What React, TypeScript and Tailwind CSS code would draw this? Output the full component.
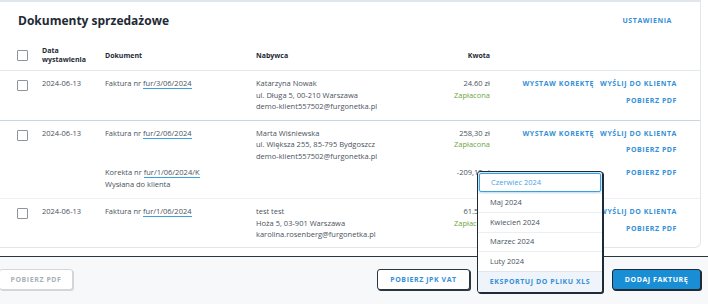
import React from "react"

const font = { fontFamily: '"Open Sans", "Liberation Sans", sans-serif' }

const Checkbox = () => (
  <span className="block h-[11px] w-[11px] rounded-[1px] border border-[#8c959d] bg-white" />
)

const DocLink = ({ label, no }: { label: string; no: string }) => (
  <span>
    {label}{" "}
    <span className="border-b border-[#3aa0e0]">{no}</span>
  </span>
)

const Action = ({ children }: { children: React.ReactNode }) => (
  <span className="text-[7px] font-bold tracking-[0.08em] text-[#3590d8]">{children}</span>
)

interface Row {
  date: string
  doc: string
  buyer: string[]
  amount: string
  status: string
  correction?: { no: string; amount: string }
}

const rows: Row[] = [
  {
    date: "2024-06-13",
    doc: "fur/3/06/2024",
    buyer: ["Katarzyna Nowak", "ul. Długa 5, 00-210 Warszawa", "demo-klient557502@furgonetka.pl"],
    amount: "24.60 zł",
    status: "Zapłacona",
  },
  {
    date: "2024-06-13",
    doc: "fur/2/06/2024",
    buyer: ["Marta Wiśniewska", "ul. Większa 255, 85-795 Bydgoszcz", "demo-klient557502@furgonetka.pl"],
    amount: "258,30 zł",
    status: "Zapłacona",
    correction: { no: "fur/1/06/2024/K", amount: "-209,10 zł" },
  },
  {
    date: "2024-06-13",
    doc: "fur/1/06/2024",
    buyer: ["test test", "Hoża 5, 03-901 Warszawa", "karolina.rosenberg@furgonetka.pl"],
    amount: "61.50 zł",
    status: "Zapłacona",
  },
]

const grid = "grid grid-cols-[25px_63px_151px_1fr_64px_187px] pl-[17px] pr-[23px]"

const months = ["Maj 2024", "Kwiecień 2024", "Marzec 2024", "Luty 2024"]

export default function App() {
  return (
    <div className="relative h-[304px] w-[708px] overflow-hidden bg-white text-[7.5px] leading-[11.5px] text-[#49535d]" style={font}>
      {/* card */}
      <div className="h-[248px] w-[701px] rounded-br-[6px] border-t-2 border-r border-b border-[#e1e6ea]">
        <div className="flex h-[38px] items-center justify-between pl-[18px] pr-[28px]">
          <h1 className="text-[12px] font-bold text-[#1e2a36]">Dokumenty sprzedażowe</h1>
          <Action>USTAWIENIA</Action>
        </div>

        <div className={`${grid} h-[31px] items-center border-b border-[#e4e8ec] text-[7px] font-bold leading-[9px] text-[#1e2a36]`}>
          <Checkbox />
          <span>Data<br />wystawienia</span>
          <span>Dokument</span>
          <span>Nabywca</span>
          <span className="text-right">Kwota</span>
          <span />
        </div>

        {rows.map((r, i) => (
          <div
            key={r.doc}
            className={`${grid} pt-[7px] ${i === 0 ? "border-b border-[#c9d6e0] pb-[7px]" : i === 1 ? "border-b border-[#eef0f3] pb-[8px]" : "pb-[6px]"}`}
          >
            <div className="pt-[2px]"><Checkbox /></div>
            <span>{r.date}</span>
            <DocLink label="Faktura nr" no={r.doc} />
            <div className="flex flex-col">
              {r.buyer.map((b) => <span key={b}>{b}</span>)}
            </div>
            <div className="flex flex-col items-end">
              <span>{r.amount}</span>
              <span className="text-[#6fa63f]">{r.status}</span>
            </div>
            <div className="flex flex-col items-end">
              <div className="flex gap-[6px]">
                <Action>WYSTAW KOREKTĘ</Action>
                <Action>WYŚLIJ DO KLIENTA</Action>
              </div>
              <div className="mt-[5px]"><Action>POBIERZ PDF</Action></div>
            </div>

            {r.correction && (
              <>
                <span className="col-start-3 mt-[5px] flex flex-col">
                  <DocLink label="Korekta nr" no={r.correction.no} />
                  <span>Wysłana do klienta</span>
                </span>
                <span className="col-start-5 mt-[5px] text-right">{r.correction.amount}</span>
                <div className="col-start-6 mt-[5px] flex justify-end"><Action>POBIERZ PDF</Action></div>
              </>
            )}
          </div>
        ))}
      </div>

      {/* footer */}
      <div className="mt-[8px] h-[48px] border-t border-[#2a3640] bg-[#f6f8fa] pt-[12px]">
        <div className="flex items-center justify-between pr-[7px]">
          <button className="-ml-[1px] h-[21px] w-[74px] rounded-[3px] border border-[#d2d7dc] bg-white text-[7px] font-bold tracking-[0.08em] text-[#a9b0b7] shadow-[1px_1px_0_#d2d7dc]">
            POBIERZ PDF
          </button>
          <div className="flex items-center gap-[8px]">
            <button className="h-[21px] w-[93px] rounded-[3px] border border-[#2a3640] bg-white text-[7px] font-bold tracking-[0.08em] text-[#3590d8] shadow-[1px_1px_0_#2a3640]">
              POBIERZ JPK VAT
            </button>
            <span className="w-[126px]" />
            <button className="h-[21px] w-[89px] rounded-[3px] border border-[#1e2a36] bg-[#1a8ed4] text-[7px] font-bold tracking-[0.08em] text-white shadow-[1px_1px_0_#1e2a36]">
              DODAJ FAKTURĘ
            </button>
          </div>
        </div>
      </div>

      {/* export dropdown */}
      <div className="absolute left-[477px] top-[171px] flex w-[126px] flex-col overflow-hidden rounded-[3px] border border-[#1e2a36] bg-white shadow-[1px_1px_0_#1e2a36]">
        <div className="m-[1px] flex h-[19px] items-center rounded-[2px] border border-[#3aa0e0] pl-[11px] text-[#4aa3e6] shadow-[0_0_2px_#3aa0e0]">
          Czerwiec 2024
        </div>
        {months.map((m) => (
          <div key={m} className="flex h-[19.4px] items-center border-t border-[#eceff2] pl-[12px]">
            {m}
          </div>
        ))}
        <div className="flex h-[21px] items-center justify-center border-t border-[#dfe5ea] bg-[#eef4f9] text-[7px] font-bold tracking-[0.08em] text-[#3590d8]">
          EKSPORTUJ DO PLIKU XLS
        </div>
      </div>
    </div>
  )
}
